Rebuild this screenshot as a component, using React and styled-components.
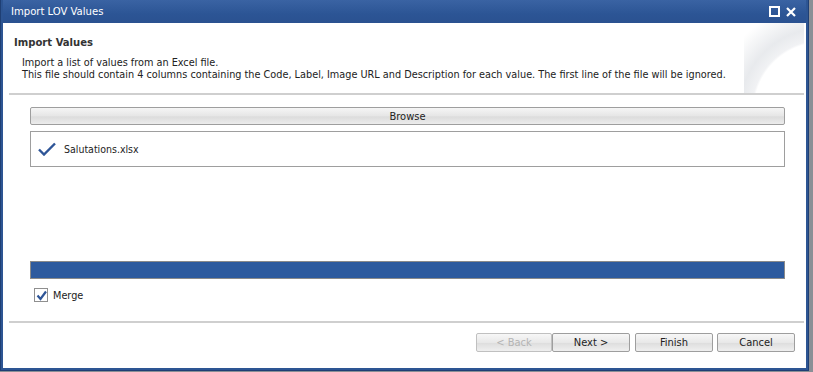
import React from "react";
import styled, { createGlobalStyle } from "styled-components";

const GlobalStyle = createGlobalStyle`
  html, body {
    margin: 0;
    padding: 0;
    background: #8a8f96;
    font-family: "DejaVu Sans Condensed", "DejaVu Sans", sans-serif;
  }
`;

export default function App() {
  return (
    <>
      <GlobalStyle />
      <Page>
        <Window>
          <TitleBar>
            <Title>Import LOV Values</Title>
            <TitleTools>
              <MaxIcon />
              <CloseIcon viewBox="0 0 10 10">
                <path d="M1 1 L9 9 M9 1 L1 9" stroke="#fff" strokeWidth="2.2" />
              </CloseIcon>
            </TitleTools>
          </TitleBar>
          <Body>
            <Header>
              <Heading>Import Values</Heading>
              <Desc>
                Import a list of values from an Excel file.
                <br />
                This file should contain 4 columns containing the Code, Label, Image URL and Description for each value. The first line of the file will be ignored.
              </Desc>
            </Header>
            <Separator />
            <Content>
              <BrowseButton>Browse</BrowseButton>
              <FileList>
                <FileRow>
                  <CheckMark viewBox="0 0 18 14">
                    <path d="M1 7.5 L6 12.5 L17 1.5" fill="none" stroke="#2e5597" strokeWidth="2.4" />
                  </CheckMark>
                  <FileName>Salutations.xlsx</FileName>
                </FileRow>
              </FileList>
              <Spacer />
              <Progress>
                <ProgressFill style={{ width: "100%" }} />
              </Progress>
              <CheckRow>
                <Box>
                  <svg width="11" height="11" viewBox="0 0 11 11">
                    <path d="M1.5 5.5 L4.5 9 L10 1.5" fill="none" stroke="#2e5597" strokeWidth="2.2" />
                  </svg>
                </Box>
                <CheckLabel>Merge</CheckLabel>
              </CheckRow>
            </Content>
            <Separator />
            <Footer>
              <Buttons>
                <Button disabled $w={76}>&lt; Back</Button>
                <Button $w={78}>Next &gt;</Button>
                <Button $w={78} $ml={5}>Finish</Button>
                <Button $w={78} $ml={4}>Cancel</Button>
              </Buttons>
            </Footer>
          </Body>
        </Window>
      </Page>
    </>
  );
}

const Page = styled.div`
  width: 813px;
  height: 372px;
  overflow: hidden;
`;

const Window = styled.div`
  width: 809px;
  height: 371px;
  box-sizing: border-box;
  background: #2d5593;
  border: 1px solid #1f3f74;
  border-top: none;
  padding: 0 2px 2px 2px;
  display: flex;
  flex-direction: column;
`;

const TitleBar = styled.div`
  height: 23px;
  flex-shrink: 0;
  display: flex;
  align-items: center;
  justify-content: space-between;
  padding: 0 10px 0 8px;
  background: linear-gradient(#3a63a3, #2c5595 60%, #2a5190);
`;

const Title = styled.span`
  color: #fff;
  font-size: 11.2px;
`;

const TitleTools = styled.div`
  display: flex;
  align-items: center;
  gap: 6px;
`;

const MaxIcon = styled.span`
  width: 7px;
  height: 7px;
  border: 2px solid #fff;
`;

const CloseIcon = styled.svg`
  width: 10px;
  height: 10px;
`;

const Body = styled.div`
  flex: 1;
  background: #fff;
  display: flex;
  flex-direction: column;
  padding: 0 2px 0 6px;
`;

const Header = styled.div`
  height: 70px;
  padding: 13px 0 0 5px;
  box-sizing: border-box;
  background:
    radial-gradient(circle at 130% 125%, rgba(255, 255, 255, 0) 58%, #f1f2f4 60%, #e8eaed 70%, rgba(255, 255, 255, 0) 92%)
    right top / 60px 70px no-repeat;
`;

const Heading = styled.div`
  font-size: 11.2px;
  font-weight: bold;
  color: #333;
  margin-bottom: 8px;
`;

const Desc = styled.div`
  font-size: 10.8px;
  line-height: 12px;
  color: #222;
  padding-left: 8px;
`;

const Separator = styled.div`
  height: 2px;
  background: #cfcfcf;
  flex-shrink: 0;
`;

const Content = styled.div`
  height: 226px;
  padding: 12px 19px 0 21px;
  box-sizing: border-box;
  display: flex;
  flex-direction: column;
`;

const BrowseButton = styled.div`
  height: 16px;
  border: 1px solid #9e9e9e;
  border-radius: 2px;
  background: linear-gradient(#f5f5f5, #e6e6e6 50%, #dcdcdc 55%, #ececec);
  font-size: 11px;
  color: #222;
  display: flex;
  align-items: center;
  justify-content: center;
`;

const FileList = styled.div`
  margin-top: 6px;
  height: 34px;
  border: 1px solid #9e9e9e;
  display: flex;
  align-items: center;
`;

const FileRow = styled.div`
  display: flex;
  align-items: center;
  padding-left: 7px;
`;

const CheckMark = styled.svg`
  width: 18px;
  height: 14px;
  margin-right: 8px;
`;

const FileName = styled.span`
  font-size: 10.5px;
  color: #222;
`;

const Spacer = styled.div`
  flex: 1;
`;

const Progress = styled.div`
  height: 16px;
  border: 1px solid #8a8a8a;
  background: #fff;
  display: flex;
`;

const ProgressFill = styled.div`
  background: #2d5a9e;
`;

const CheckRow = styled.div`
  display: flex;
  align-items: center;
  margin: 9px 0 19px 4px;
`;

const Box = styled.span`
  width: 12px;
  height: 12px;
  border: 1px solid #8f8f8f;
  display: flex;
  align-items: center;
  justify-content: center;
  margin-right: 5px;
`;

const CheckLabel = styled.span`
  font-size: 10.8px;
  color: #222;
`;

const Footer = styled.div`
  flex: 1;
  display: flex;
  justify-content: flex-end;
  align-items: flex-start;
  padding: 10px 9px 0 0;
`;

const Buttons = styled.div`
  display: flex;
`;

const Button = styled.button`
  width: ${p => p.$w}px;
  margin-left: ${p => p.$ml || 0}px;
  height: 19px;
  padding: 0;
  border: 1px solid #9e9e9e;
  border-radius: 2px;
  background: linear-gradient(#f7f7f7, #e8e8e8 50%, #dedede 55%, #efefef);
  font-family: inherit;
  font-size: 11px;
  color: #222;

  &:disabled {
    color: #b4b4b4;
    border-color: #c0c0c0;
  }
`;
